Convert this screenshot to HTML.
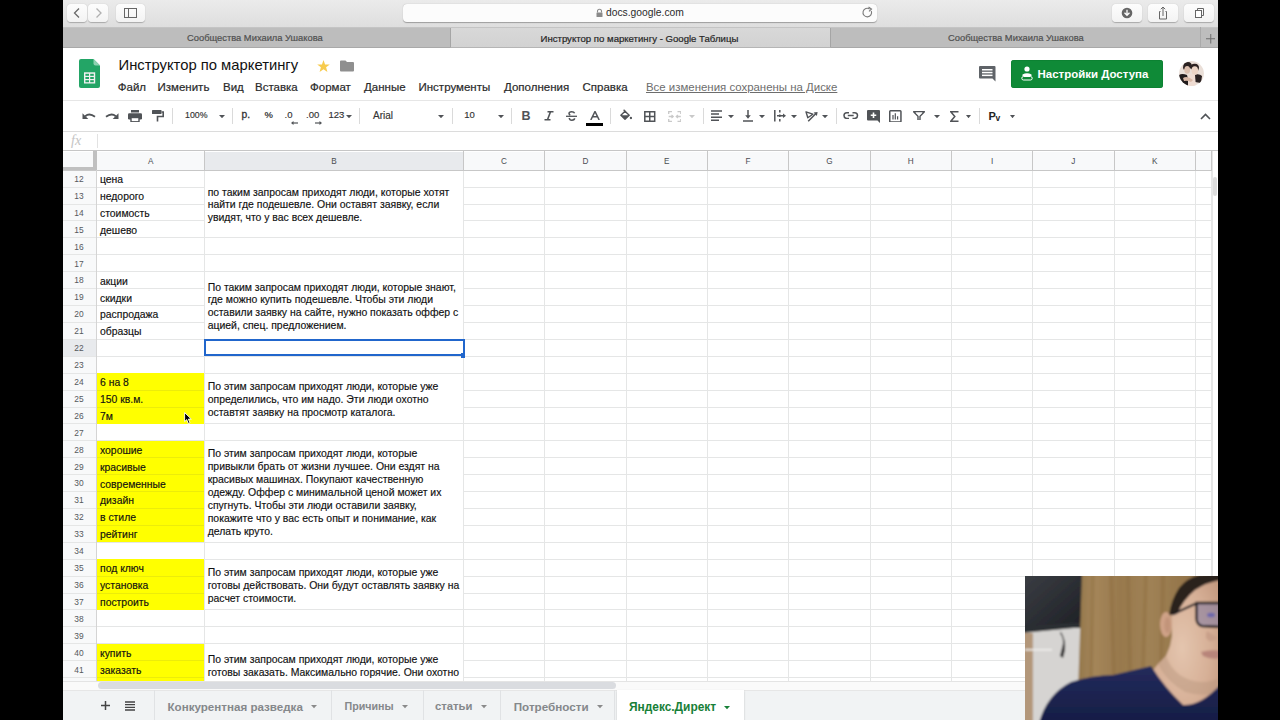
<!DOCTYPE html><html><head><meta charset="utf-8"><style>
*{box-sizing:border-box;margin:0;padding:0}
html,body{width:1280px;height:720px;overflow:hidden;background:#000}
body{position:relative;font-family:"Liberation Sans",sans-serif}
.a{position:absolute}
.t{position:absolute;white-space:pre;line-height:1}
#app{position:absolute;left:62.5px;top:0;width:1155px;height:720px;background:#fff;overflow:hidden}
</style></head><body><div id="app"></div>
<div class="a" style="left:62.5px;top:0;width:1155px;height:27.5px;background:linear-gradient(#ebebeb,#dedede);border-bottom:1px solid #c4c4c4"></div>
<div class="a" style="left:67px;top:4px;width:20px;height:18px;background:linear-gradient(#fdfdfd,#f3f3f3);border-radius:4px;box-shadow:0 0.5px 1px rgba(0,0,0,.25)"><svg width="20" height="18" style="position:absolute;left:0;top:0"><path d="M12 4.5 L7.5 9 L12 13.5" fill="none" stroke="#6a6a6a" stroke-width="1.3"/></svg></div>
<div class="a" style="left:88px;top:4px;width:20px;height:18px;background:linear-gradient(#fdfdfd,#f3f3f3);border-radius:4px;box-shadow:0 0.5px 1px rgba(0,0,0,.25)"><svg width="20" height="18" style="position:absolute;left:0;top:0"><path d="M8.5 4.5 L13 9 L8.5 13.5" fill="none" stroke="#b0b0b0" stroke-width="1.3"/></svg></div>
<div class="a" style="left:116px;top:4px;width:29px;height:18px;background:linear-gradient(#fdfdfd,#f3f3f3);border-radius:4px;box-shadow:0 0.5px 1px rgba(0,0,0,.25)"><svg width="29" height="18" style="position:absolute;left:0;top:0"><rect x="8.5" y="4.5" width="12" height="9" fill="none" stroke="#666" stroke-width="1"/><line x1="12.5" y1="4.5" x2="12.5" y2="13.5" stroke="#666" stroke-width="1"/></svg></div>
<div class="a" style="left:403px;top:4px;width:474px;height:18px;background:#fcfcfc;border-radius:4px;box-shadow:0 0.5px 1px rgba(0,0,0,.3)"></div>
<svg class="a" style="left:595px;top:8px" width="9" height="10"><path d="M2.5 4.5 V3.2 A2 2 0 0 1 6.5 3.2 V4.5" fill="none" stroke="#8a8a8a" stroke-width="1.1"/><rect x="1.5" y="4.5" width="6" height="4.5" rx="0.5" fill="#8a8a8a"/></svg>
<div class="t" style="left:606px;top:7.5px;font-size:10.3px;color:#2b2b2b">docs.google.com</div>
<svg class="a" style="left:861px;top:6px" width="13" height="13"><path d="M10.3 5 A4.3 4.3 0 1 1 8.7 3" fill="none" stroke="#7a7a7a" stroke-width="1.1"/><path d="M7.5 1 L10.5 3 L8 5.3" fill="none" stroke="#7a7a7a" stroke-width="1.1"/></svg>
<div class="a" style="left:1112px;top:4px;width:30px;height:18px;background:linear-gradient(#fdfdfd,#f3f3f3);border-radius:4px;box-shadow:0 0.5px 1px rgba(0,0,0,.25)"><svg width="30" height="18" style="position:absolute;left:0;top:0"><circle cx="15" cy="9" r="5.3" fill="#666"/><path d="M15 5.8 V11 M12.5 8.8 L15 11.3 L17.5 8.8" fill="none" stroke="#fff" stroke-width="1.3"/></svg></div>
<div class="a" style="left:1148px;top:4px;width:30px;height:18px;background:linear-gradient(#fdfdfd,#f3f3f3);border-radius:4px;box-shadow:0 0.5px 1px rgba(0,0,0,.25)"><svg width="30" height="18" style="position:absolute;left:0;top:0"><path d="M12.5 7.5 H11.5 V15 H18.5 V7.5 H17.5" fill="none" stroke="#666" stroke-width="1"/><path d="M15 12 V3 M12.8 5.2 L15 3 L17.2 5.2" fill="none" stroke="#666" stroke-width="1"/></svg></div>
<div class="a" style="left:1184px;top:4px;width:30px;height:18px;background:linear-gradient(#fdfdfd,#f3f3f3);border-radius:4px;box-shadow:0 0.5px 1px rgba(0,0,0,.25)"><svg width="30" height="18" style="position:absolute;left:0;top:0"><rect x="11.5" y="6.5" width="6" height="7" fill="#fff" stroke="#666" stroke-width="1"/><path d="M13.5 6.5 V4.5 H19.5 V11.5 H17.5" fill="none" stroke="#666" stroke-width="1"/></svg></div>
<div class="a" style="left:62.5px;top:27.5px;width:1155px;height:20.5px;background:#bdbdbd;border-bottom:1px solid #a9a9a9"></div>
<div class="a" style="left:449.5px;top:27.5px;width:381px;height:20.5px;background:linear-gradient(#d8d8d8,#d2d2d2);border-left:1px solid #a5a5a5;border-right:1px solid #a5a5a5;border-bottom:1px solid #b5b5b5"></div>
<div class="a" style="left:1200px;top:27px;width:18px;height:21px;border-left:1px solid #aaa"></div>
<svg class="a" style="left:1205.5px;top:34px" width="9.5" height="9.5"><path d="M4.75 0 V9.5 M0 4.75 H9.5" stroke="#6c6c6c" stroke-width="1"/></svg>
<div class="t" style="left:187px;top:33.8px;font-size:9.35px;color:#505050;-webkit-text-stroke:0.2px #505050">Сообщества Михаила Ушакова</div>
<div class="t" style="left:540.5px;top:33.8px;font-size:9.6px;color:#262626;-webkit-text-stroke:0.2px #262626">Инструктор по маркетингу - Google Таблицы</div>
<div class="t" style="left:948px;top:33.8px;font-size:9.35px;color:#505050;-webkit-text-stroke:0.2px #505050">Сообщества Михаила Ушакова</div>
<svg class="a" style="left:79px;top:59px" width="21" height="29" viewBox="0 0 21 29">
<path d="M2 0 H14.5 L21 6.5 V27 A2 2 0 0 1 19 29 H2 A2 2 0 0 1 0 27 V2 A2 2 0 0 1 2 0Z" fill="#23a566"/>
<path d="M14.5 0 L21 6.5 H16.5 A2 2 0 0 1 14.5 4.5Z" fill="#8ed1b1"/>
<rect x="5" y="13.3" width="11.2" height="11.2" fill="#f1f1f1"/>
<rect x="6.4" y="14.8" width="3.6" height="2" fill="#23a566"/><rect x="11.2" y="14.8" width="3.6" height="2" fill="#23a566"/>
<rect x="6.4" y="18" width="3.6" height="2" fill="#23a566"/><rect x="11.2" y="18" width="3.6" height="2" fill="#23a566"/>
<rect x="6.4" y="21.2" width="3.6" height="2" fill="#23a566"/><rect x="11.2" y="21.2" width="3.6" height="2" fill="#23a566"/>
</svg>
<div class="t" style="left:118.5px;top:57.5px;font-size:14.8px;color:#111">Инструктор по маркетингу</div>
<svg class="a" style="left:317px;top:59.5px" width="13" height="12" viewBox="0 0 24 23"><path d="M12 0 L15 8.5 H24 L17 14 L19.5 23 L12 17.5 L4.5 23 L7 14 L0 8.5 H9Z" fill="#f7cb4d"/></svg>
<svg class="a" style="left:339.5px;top:60px" width="14" height="12"><path d="M1 0.5 H5.5 L7 2 H13 A1 1 0 0 1 14 3 V10.5 A1 1 0 0 1 13 11.5 H1 A1 1 0 0 1 0 10.5 V1.5 A1 1 0 0 1 1 0.5Z" fill="#8f8f8f"/></svg>
<div class="t" style="left:117.8px;top:82px;font-size:11.5px;color:#2a2a2a;-webkit-text-stroke:0.2px #2a2a2a">Файл</div>
<div class="t" style="left:157.5px;top:82px;font-size:11.5px;color:#2a2a2a;-webkit-text-stroke:0.2px #2a2a2a">Изменить</div>
<div class="t" style="left:223px;top:82px;font-size:11.5px;color:#2a2a2a;-webkit-text-stroke:0.2px #2a2a2a">Вид</div>
<div class="t" style="left:255px;top:82px;font-size:11.5px;color:#2a2a2a;-webkit-text-stroke:0.2px #2a2a2a">Вставка</div>
<div class="t" style="left:310px;top:82px;font-size:11.5px;color:#2a2a2a;-webkit-text-stroke:0.2px #2a2a2a">Формат</div>
<div class="t" style="left:364px;top:82px;font-size:11.5px;color:#2a2a2a;-webkit-text-stroke:0.2px #2a2a2a">Данные</div>
<div class="t" style="left:418.5px;top:82px;font-size:11.5px;color:#2a2a2a;-webkit-text-stroke:0.2px #2a2a2a">Инструменты</div>
<div class="t" style="left:504px;top:82px;font-size:11.5px;color:#2a2a2a;-webkit-text-stroke:0.2px #2a2a2a">Дополнения</div>
<div class="t" style="left:582.5px;top:82px;font-size:11.5px;color:#2a2a2a;-webkit-text-stroke:0.2px #2a2a2a">Справка</div>
<div class="t" style="left:646px;top:82px;font-size:11.43px;color:#6d6d6d;text-decoration:underline">Все изменения сохранены на Диске</div>
<svg class="a" style="left:978.5px;top:66px" width="17" height="16"><path d="M1 0 H15.5 A1 1 0 0 1 16.5 1 V15.5 L13.5 12.5 H1 A1 1 0 0 1 0 11.5 V1 A1 1 0 0 1 1 0Z" fill="#5f6368"/><rect x="3" y="3" width="10.5" height="1.5" fill="#fff"/><rect x="3" y="5.8" width="10.5" height="1.5" fill="#fff"/><rect x="3" y="8.6" width="10.5" height="1.5" fill="#fff"/></svg>
<div class="a" style="left:1011px;top:59.5px;width:151.5px;height:28.5px;background:#0f8a37;border-radius:3px;box-shadow:inset 0 0 0 0.5px #0b7a2f"></div>
<svg class="a" style="left:1021px;top:66px" width="12" height="15" viewBox="0 0 12 15"><circle cx="6" cy="3" r="2.6" fill="#fff"/><path d="M1.5 8.5 Q6 6 10.5 8.5 V10 H1.5Z" fill="#fff"/><rect x="0.8" y="10.5" width="10.4" height="3.5" rx="1.7" fill="none" stroke="#fff" stroke-width="1"/></svg>
<div class="t" style="left:1037.5px;top:69.2px;font-size:11.47px;color:#fff;font-weight:700">Настройки Доступа</div>
<svg class="a" style="left:1179.2px;top:61.4px" width="25" height="25"><defs><clipPath id="av"><circle cx="12.5" cy="12.5" r="12.4"/></clipPath><filter id="avb"><feGaussianBlur stdDeviation="0.5"/></filter></defs>
<g clip-path="url(#av)"><rect width="25" height="25" fill="#eadfd8"/><g filter="url(#avb)">
<path d="M0 14 Q3 12 8 14 L11 26 H0Z" fill="#231a1a"/>
<path d="M15 14 Q20 12 23 15 L22 22 L16 21Z" fill="#2a2020"/>
<path d="M4 7 Q4 1 9 1 Q13 1 13 6 L11 8 Q8 4 5 9Z" fill="#2b2121"/>
<ellipse cx="8.2" cy="8.8" rx="2.9" ry="3.9" fill="#dcbfae"/>
<path d="M11.5 6 Q12 2.5 16 2.8 Q20 3 20 7 L19 10 Q16 5 12.5 8.5Z" fill="#2e2422"/>
<ellipse cx="15.8" cy="9.6" rx="3.3" ry="4.3" fill="#ecd4c5"/>
<path d="M9 13 Q12 12 16 14 L17 26 H9Z" fill="#efdcd2"/>
<path d="M4 17 Q8 14 14 19 L12 21 Q8 19 5 20Z" fill="#d9b8a6"/>
</g></g></svg>
<div class="a" style="left:63px;top:99.5px;width:1155px;height:1px;background:#e6e6e6"></div>
<div class="a" style="left:63px;top:130.5px;width:1155px;height:1px;background:#dcdcdc"></div>
<svg class="a" style="left:82px;top:111.5px" width="14" height="8"><path d="M3.2 4.2 Q7.5 0.5 13 4.8" fill="none" stroke="#505357" stroke-width="1.8"/><path d="M0.5 1.2 V7 H6.3Z" fill="#505357"/></svg>
<svg class="a" style="left:105px;top:111.5px" width="14" height="8"><path d="M10.8 4.2 Q6.5 0.5 1 4.8" fill="none" stroke="#505357" stroke-width="1.8"/><path d="M13.5 1.2 V7 H7.7Z" fill="#505357"/></svg>
<svg class="a" style="left:127.5px;top:110px" width="14" height="12"><rect x="3" y="0" width="8" height="2.5" fill="#505357"/><rect x="0" y="3.2" width="14" height="6.3" rx="1.2" fill="#505357"/><rect x="3" y="7.5" width="8" height="4.3" fill="#fff" stroke="#505357" stroke-width="1.4"/></svg>
<svg class="a" style="left:151.5px;top:110px" width="12" height="12"><rect x="0" y="0" width="9.5" height="4" rx="0.6" fill="#505357"/><path d="M9.5 2 H11.2 V6.5 H5.5 V11.5" fill="none" stroke="#505357" stroke-width="1.6"/></svg>
<div class="a" style="left:171.5px;top:108px;width:1px;height:16px;background:#dadada"></div>
<div class="t" style="left:185px;top:110.5px;font-size:8.8px;color:#333;-webkit-text-stroke:0.15px #333">100%</div>
<svg class="a" style="left:218.5px;top:114.8px" width="6" height="3.5"><path d="M0 0 H6 L3.0 3.2Z" fill="#505357"/></svg>
<div class="a" style="left:231.5px;top:108px;width:1px;height:16px;background:#dadada"></div>
<div class="t" style="left:241.5px;top:109.5px;font-size:10.3px;color:#333;-webkit-text-stroke:0.3px #333">р.</div>
<div class="t" style="left:264.5px;top:110px;font-size:9.5px;color:#3c3c3c;font-weight:700">%</div>
<div class="t" style="left:284.5px;top:110px;font-size:9.5px;color:#333;-webkit-text-stroke:0.15px #333">.0</div>
<svg class="a" style="left:290.5px;top:120.5px" width="7" height="4"><path d="M1 2 H7" stroke="#505357" stroke-width="1.2"/><path d="M0 2 L2.5 0 V4Z" fill="#505357"/></svg>
<div class="t" style="left:306px;top:110px;font-size:9.5px;color:#333;-webkit-text-stroke:0.15px #333">.00</div>
<svg class="a" style="left:314.5px;top:120.5px" width="7" height="4"><path d="M0 2 H6" stroke="#505357" stroke-width="1.2"/><path d="M7 2 L4.5 0 V4Z" fill="#505357"/></svg>
<div class="t" style="left:328.5px;top:110px;font-size:9.5px;color:#333;-webkit-text-stroke:0.15px #333">123</div>
<svg class="a" style="left:345.8px;top:114.8px" width="6" height="3.5"><path d="M0 0 H6 L3.0 3.2Z" fill="#505357"/></svg>
<div class="a" style="left:359.4px;top:108px;width:1px;height:16px;background:#dadada"></div>
<div class="t" style="left:373px;top:110.5px;font-size:10px;color:#333;-webkit-text-stroke:0.15px #333">Arial</div>
<svg class="a" style="left:437.5px;top:114.8px" width="6" height="3.5"><path d="M0 0 H6 L3.0 3.2Z" fill="#505357"/></svg>
<div class="a" style="left:451.5px;top:108px;width:1px;height:16px;background:#dadada"></div>
<div class="t" style="left:464.2px;top:109.6px;font-size:9.5px;color:#333;-webkit-text-stroke:0.15px #333">10</div>
<svg class="a" style="left:498px;top:114.8px" width="6" height="3.5"><path d="M0 0 H6 L3.0 3.2Z" fill="#505357"/></svg>
<div class="a" style="left:511.2px;top:108px;width:1px;height:16px;background:#dadada"></div>
<div class="t" style="left:521.5px;top:109.8px;font-size:12.5px;color:#505357;font-weight:700">B</div>
<svg class="a" style="left:543.5px;top:111px" width="10" height="9.5"><path d="M3.5 0.8 H9.5 M0.5 8.7 H6.5 M6.5 0.8 L3.5 8.7" fill="none" stroke="#505357" stroke-width="1.6"/></svg>
<svg class="a" style="left:565.5px;top:110.8px" width="11.5" height="10"><path d="M8.6 2.2 Q8 0.8 5.7 0.8 Q3 0.8 3 2.6 Q3 3.6 4.3 4.2 M3.3 7 Q3.5 9.2 5.8 9.2 Q8.6 9.2 8.6 7.3" fill="none" stroke="#505357" stroke-width="1.5"/><path d="M0 5.3 H11.5" stroke="#505357" stroke-width="1.3"/></svg>
<svg class="a" style="left:589.5px;top:110.8px" width="10" height="9"><path d="M0.8 9 L5 0.5 L9.2 9 M2.6 5.8 H7.4" fill="none" stroke="#505357" stroke-width="1.5"/></svg>
<div class="a" style="left:586.2px;top:122.5px;width:17px;height:3px;background:#000"></div>
<div class="a" style="left:610px;top:108px;width:1px;height:16px;background:#dadada"></div>
<svg class="a" style="left:619.5px;top:108.5px" width="12.5" height="11"><path d="M3.6 0.7 L5.8 2.9" stroke="#505357" stroke-width="1.3"/><path d="M0.9 6.2 L5 2.2 L9.2 6.2 L5 10.2Z" fill="#fff" stroke="#505357" stroke-width="1.4" stroke-linejoin="round"/><path d="M0.9 6.2 H9.2 L5 10.2Z" fill="#505357"/><circle cx="10.9" cy="9" r="1.15" fill="#505357"/></svg>
<svg class="a" style="left:644.2px;top:110.5px" width="11.5" height="11"><path d="M0.8 0.8 H10.7 V10.2 H0.8Z M5.75 0.8 V10.2 M0.8 5.5 H10.7" fill="none" stroke="#505357" stroke-width="1.5"/></svg>
<svg class="a" style="left:667.5px;top:110.5px" width="13.5" height="11"><path d="M0.7 3 V0.7 H4 M9.5 0.7 H12.8 V3 M0.7 8 V10.3 H4 M9.5 10.3 H12.8 V8 M0.7 5.5 H5 M12.8 5.5 H8.5" fill="none" stroke="#c9c9c9" stroke-width="1.3"/><path d="M3.5 4 L5.3 5.5 L3.5 7 M10 4 L8.2 5.5 L10 7" fill="none" stroke="#c9c9c9" stroke-width="1.1"/></svg>
<svg class="a" style="left:689.2px;top:114.8px" width="6" height="3.5"><path d="M0 0 H6 L3.0 3.2Z" fill="#c9c9c9"/></svg>
<div class="a" style="left:702.5px;top:108px;width:1px;height:16px;background:#dadada"></div>
<svg class="a" style="left:710.8px;top:110.2px" width="11.5" height="11.5"><path d="M0 1 H11.5 M0 4.1 H8 M0 7.2 H11.5 M0 10.3 H8" stroke="#505357" stroke-width="1.5"/></svg>
<svg class="a" style="left:727.5px;top:114.8px" width="6" height="3.5"><path d="M0 0 H6 L3.0 3.2Z" fill="#505357"/></svg>
<svg class="a" style="left:743px;top:109.5px" width="10" height="12"><path d="M5 0 V6" stroke="#505357" stroke-width="1.5"/><path d="M2.2 5.2 H7.8 L5 8.8Z" fill="#505357"/><path d="M0 11 H10" stroke="#505357" stroke-width="1.5"/></svg>
<svg class="a" style="left:759.3px;top:114.8px" width="6" height="3.5"><path d="M0 0 H6 L3.0 3.2Z" fill="#505357"/></svg>
<svg class="a" style="left:773.5px;top:110px" width="12" height="11.5"><path d="M0.8 0 V11.5 M5.8 0 V2.5 M5.8 4.5 V7 M5.8 9 V11.5 M3 5.75 H10.5" fill="none" stroke="#505357" stroke-width="1.5"/><path d="M12 5.75 L9 3.5 V8Z" fill="#505357"/></svg>
<svg class="a" style="left:790.5px;top:114.8px" width="6" height="3.5"><path d="M0 0 H6 L3.0 3.2Z" fill="#505357"/></svg>
<svg class="a" style="left:805px;top:110.5px" width="13" height="11"><path d="M1 0.8 L7.8 3.2 L2.8 6.8Z" fill="none" stroke="#505357" stroke-width="1.4" stroke-linejoin="round"/><path d="M3.2 10.3 L11.5 2" stroke="#505357" stroke-width="1.5"/><path d="M12.6 0.9 L8.6 1.6 L11.9 4.9Z" fill="#505357"/></svg>
<svg class="a" style="left:822.2px;top:114.8px" width="6" height="3.5"><path d="M0 0 H6 L3.0 3.2Z" fill="#505357"/></svg>
<div class="a" style="left:835.5px;top:108px;width:1px;height:16px;background:#dadada"></div>
<svg class="a" style="left:843px;top:112.3px" width="15.5" height="7.2"><path d="M6 0.8 H3.8 A2.8 2.8 0 0 0 3.8 6.4 H6 M9.5 0.8 H11.7 A2.8 2.8 0 0 1 11.7 6.4 H9.5 M4.8 3.6 H10.7" fill="none" stroke="#505357" stroke-width="1.5"/></svg>
<svg class="a" style="left:866.8px;top:109.6px" width="13" height="13"><path d="M0 1 A1 1 0 0 1 1 0 H12 A1 1 0 0 1 13 1 V13 L10.5 10.5 H1 A1 1 0 0 1 0 9.5Z" fill="#505357"/><path d="M6.5 2.5 V8 M3.75 5.25 H9.25" stroke="#fff" stroke-width="1.6"/></svg>
<svg class="a" style="left:889.3px;top:109.6px" width="12.7" height="12.7"><rect x="0.75" y="0.75" width="11.2" height="11.2" rx="0.8" fill="none" stroke="#505357" stroke-width="1.5"/><path d="M4 5 V9.5 M6.3 3.3 V9.5 M8.6 6.3 V9.5" stroke="#505357" stroke-width="1.2"/></svg>
<svg class="a" style="left:913px;top:110.8px" width="12" height="9.5"><path d="M0.6 0.8 H11.4 L7 5.2 V9.5 H5 V5.2Z" fill="none" stroke="#505357" stroke-width="1.4" stroke-linejoin="round"/><path d="M2.6 1.6 H9.4 L6 4.8Z" fill="#fff"/></svg>
<svg class="a" style="left:934px;top:114.8px" width="6" height="3.5"><path d="M0 0 H6 L3.0 3.2Z" fill="#505357"/></svg>
<svg class="a" style="left:950.2px;top:110.5px" width="8.8" height="11"><path d="M8.5 0.8 H0.8 L4.8 5.5 L0.8 10.2 H8.5" fill="none" stroke="#505357" stroke-width="1.5"/></svg>
<svg class="a" style="left:966.2px;top:114.8px" width="5" height="3.5"><path d="M0 0 H5 L2.5 3.2Z" fill="#505357"/></svg>
<div class="a" style="left:979.4px;top:108px;width:1px;height:16px;background:#dadada"></div>
<div class="t" style="left:988.5px;top:111px;font-size:11px;color:#222;font-weight:700">Р</div>
<div class="t" style="left:995.5px;top:113.5px;font-size:8.5px;color:#222;font-weight:700">v</div>
<svg class="a" style="left:1009.8px;top:114.8px" width="5" height="3.5"><path d="M0 0 H5 L2.5 3.2Z" fill="#505357"/></svg>
<svg class="a" style="left:1199.5px;top:112.5px" width="11" height="7"><path d="M1 6 L5.5 1.5 L10 6" fill="none" stroke="#505357" stroke-width="1.6"/></svg>
<div class="t" style="left:71px;top:133.5px;font-size:14px;color:#c4c4c4;font-family:'Liberation Serif',serif;font-style:italic">fx</div>
<div class="a" style="left:96.5px;top:134px;width:1px;height:14px;background:#e2e2e2"></div>
<div class="a" style="left:63px;top:150.3px;width:1155px;height:1.2px;background:#c6c6c6"></div>
<div class="a" style="left:63px;top:151.5px;width:1149px;height:18.8px;background:#f8f9fa"></div>
<div class="a" style="left:204.4px;top:151.5px;width:259px;height:18.8px;background:#e8eaed"></div>
<div class="a" style="left:63px;top:170px;width:34px;height:520px;background:#f8f9fa"></div>
<div class="a" style="left:63px;top:339.34999999999997px;width:34px;height:16.915px;background:#e8eaed"></div>
<div class="a" style="left:63px;top:186.61px;width:141.4px;height:1px;background:#e5e6e6"></div>
<div class="a" style="left:463.4px;top:186.61px;width:748.3px;height:1px;background:#e5e6e6"></div>
<div class="a" style="left:63px;top:203.53px;width:141.4px;height:1px;background:#e5e6e6"></div>
<div class="a" style="left:463.4px;top:203.53px;width:748.3px;height:1px;background:#e5e6e6"></div>
<div class="a" style="left:63px;top:220.44px;width:141.4px;height:1px;background:#e5e6e6"></div>
<div class="a" style="left:463.4px;top:220.44px;width:748.3px;height:1px;background:#e5e6e6"></div>
<div class="a" style="left:63px;top:237.36px;width:1148.7px;height:1px;background:#e5e6e6"></div>
<div class="a" style="left:63px;top:254.27px;width:1148.7px;height:1px;background:#e5e6e6"></div>
<div class="a" style="left:63px;top:271.19px;width:1148.7px;height:1px;background:#e5e6e6"></div>
<div class="a" style="left:63px;top:288.11px;width:141.4px;height:1px;background:#e5e6e6"></div>
<div class="a" style="left:463.4px;top:288.11px;width:748.3px;height:1px;background:#e5e6e6"></div>
<div class="a" style="left:63px;top:305.02px;width:141.4px;height:1px;background:#e5e6e6"></div>
<div class="a" style="left:463.4px;top:305.02px;width:748.3px;height:1px;background:#e5e6e6"></div>
<div class="a" style="left:63px;top:321.93px;width:141.4px;height:1px;background:#e5e6e6"></div>
<div class="a" style="left:463.4px;top:321.93px;width:748.3px;height:1px;background:#e5e6e6"></div>
<div class="a" style="left:63px;top:338.85px;width:1148.7px;height:1px;background:#e5e6e6"></div>
<div class="a" style="left:63px;top:355.76px;width:1148.7px;height:1px;background:#e5e6e6"></div>
<div class="a" style="left:63px;top:372.68px;width:1148.7px;height:1px;background:#e5e6e6"></div>
<div class="a" style="left:63px;top:389.59px;width:141.4px;height:1px;background:#e5e6e6"></div>
<div class="a" style="left:463.4px;top:389.59px;width:748.3px;height:1px;background:#e5e6e6"></div>
<div class="a" style="left:63px;top:406.51px;width:141.4px;height:1px;background:#e5e6e6"></div>
<div class="a" style="left:463.4px;top:406.51px;width:748.3px;height:1px;background:#e5e6e6"></div>
<div class="a" style="left:63px;top:423.42px;width:1148.7px;height:1px;background:#e5e6e6"></div>
<div class="a" style="left:63px;top:440.34px;width:1148.7px;height:1px;background:#e5e6e6"></div>
<div class="a" style="left:63px;top:457.25px;width:141.4px;height:1px;background:#e5e6e6"></div>
<div class="a" style="left:463.4px;top:457.25px;width:748.3px;height:1px;background:#e5e6e6"></div>
<div class="a" style="left:63px;top:474.17px;width:141.4px;height:1px;background:#e5e6e6"></div>
<div class="a" style="left:463.4px;top:474.17px;width:748.3px;height:1px;background:#e5e6e6"></div>
<div class="a" style="left:63px;top:491.08px;width:141.4px;height:1px;background:#e5e6e6"></div>
<div class="a" style="left:463.4px;top:491.08px;width:748.3px;height:1px;background:#e5e6e6"></div>
<div class="a" style="left:63px;top:508.00px;width:141.4px;height:1px;background:#e5e6e6"></div>
<div class="a" style="left:463.4px;top:508.00px;width:748.3px;height:1px;background:#e5e6e6"></div>
<div class="a" style="left:63px;top:524.91px;width:141.4px;height:1px;background:#e5e6e6"></div>
<div class="a" style="left:463.4px;top:524.91px;width:748.3px;height:1px;background:#e5e6e6"></div>
<div class="a" style="left:63px;top:541.83px;width:1148.7px;height:1px;background:#e5e6e6"></div>
<div class="a" style="left:63px;top:558.74px;width:1148.7px;height:1px;background:#e5e6e6"></div>
<div class="a" style="left:63px;top:575.66px;width:141.4px;height:1px;background:#e5e6e6"></div>
<div class="a" style="left:463.4px;top:575.66px;width:748.3px;height:1px;background:#e5e6e6"></div>
<div class="a" style="left:63px;top:592.58px;width:141.4px;height:1px;background:#e5e6e6"></div>
<div class="a" style="left:463.4px;top:592.58px;width:748.3px;height:1px;background:#e5e6e6"></div>
<div class="a" style="left:63px;top:609.49px;width:1148.7px;height:1px;background:#e5e6e6"></div>
<div class="a" style="left:63px;top:626.40px;width:1148.7px;height:1px;background:#e5e6e6"></div>
<div class="a" style="left:63px;top:643.32px;width:1148.7px;height:1px;background:#e5e6e6"></div>
<div class="a" style="left:63px;top:660.23px;width:141.4px;height:1px;background:#e5e6e6"></div>
<div class="a" style="left:463.4px;top:660.23px;width:748.3px;height:1px;background:#e5e6e6"></div>
<div class="a" style="left:63px;top:677.15px;width:141.4px;height:1px;background:#e5e6e6"></div>
<div class="a" style="left:463.4px;top:677.15px;width:748.3px;height:1px;background:#e5e6e6"></div>
<div class="a" style="left:97px;top:373.17999999999995px;width:107.4px;height:50.745px;background:#ffff00"></div>
<div class="a" style="left:97px;top:440.84px;width:107.4px;height:101.49px;background:#ffff00"></div>
<div class="a" style="left:97px;top:559.2449999999999px;width:107.4px;height:50.745px;background:#ffff00"></div>
<div class="a" style="left:97px;top:643.8199999999999px;width:107.4px;height:50.745px;background:#ffff00"></div>
<div class="a" style="left:97px;top:389.59px;width:107.4px;height:1px;background:#ecec0a"></div>
<div class="a" style="left:97px;top:406.51px;width:107.4px;height:1px;background:#ecec0a"></div>
<div class="a" style="left:97px;top:457.25px;width:107.4px;height:1px;background:#ecec0a"></div>
<div class="a" style="left:97px;top:474.17px;width:107.4px;height:1px;background:#ecec0a"></div>
<div class="a" style="left:97px;top:491.08px;width:107.4px;height:1px;background:#ecec0a"></div>
<div class="a" style="left:97px;top:508.00px;width:107.4px;height:1px;background:#ecec0a"></div>
<div class="a" style="left:97px;top:524.91px;width:107.4px;height:1px;background:#ecec0a"></div>
<div class="a" style="left:97px;top:575.66px;width:107.4px;height:1px;background:#ecec0a"></div>
<div class="a" style="left:97px;top:592.58px;width:107.4px;height:1px;background:#ecec0a"></div>
<div class="a" style="left:97px;top:660.23px;width:107.4px;height:1px;background:#ecec0a"></div>
<div class="a" style="left:97px;top:677.15px;width:107.4px;height:1px;background:#ecec0a"></div>
<div class="a" style="left:203.90px;top:170px;width:1px;height:519.5px;background:#e5e6e6"></div>
<div class="a" style="left:203.90px;top:151px;width:1px;height:19.3px;background:#c7c7c7"></div>
<div class="a" style="left:462.90px;top:170px;width:1px;height:519.5px;background:#e5e6e6"></div>
<div class="a" style="left:462.90px;top:151px;width:1px;height:19.3px;background:#c7c7c7"></div>
<div class="a" style="left:544.23px;top:170px;width:1px;height:519.5px;background:#e5e6e6"></div>
<div class="a" style="left:544.23px;top:151px;width:1px;height:19.3px;background:#c7c7c7"></div>
<div class="a" style="left:625.56px;top:170px;width:1px;height:519.5px;background:#e5e6e6"></div>
<div class="a" style="left:625.56px;top:151px;width:1px;height:19.3px;background:#c7c7c7"></div>
<div class="a" style="left:706.89px;top:170px;width:1px;height:519.5px;background:#e5e6e6"></div>
<div class="a" style="left:706.89px;top:151px;width:1px;height:19.3px;background:#c7c7c7"></div>
<div class="a" style="left:788.22px;top:170px;width:1px;height:519.5px;background:#e5e6e6"></div>
<div class="a" style="left:788.22px;top:151px;width:1px;height:19.3px;background:#c7c7c7"></div>
<div class="a" style="left:869.55px;top:170px;width:1px;height:519.5px;background:#e5e6e6"></div>
<div class="a" style="left:869.55px;top:151px;width:1px;height:19.3px;background:#c7c7c7"></div>
<div class="a" style="left:950.88px;top:170px;width:1px;height:519.5px;background:#e5e6e6"></div>
<div class="a" style="left:950.88px;top:151px;width:1px;height:19.3px;background:#c7c7c7"></div>
<div class="a" style="left:1032.21px;top:170px;width:1px;height:519.5px;background:#e5e6e6"></div>
<div class="a" style="left:1032.21px;top:151px;width:1px;height:19.3px;background:#c7c7c7"></div>
<div class="a" style="left:1113.54px;top:170px;width:1px;height:519.5px;background:#e5e6e6"></div>
<div class="a" style="left:1113.54px;top:151px;width:1px;height:19.3px;background:#c7c7c7"></div>
<div class="a" style="left:1194.87px;top:170px;width:1px;height:519.5px;background:#e5e6e6"></div>
<div class="a" style="left:1194.87px;top:151px;width:1px;height:19.3px;background:#c7c7c7"></div>
<div class="a" style="left:1211.20px;top:170px;width:1px;height:519.5px;background:#e5e6e6"></div>
<div class="a" style="left:1211.20px;top:151px;width:1px;height:19.3px;background:#c7c7c7"></div>
<div class="a" style="left:63px;top:169.5px;width:1149px;height:1px;background:#c7c7c7"></div>
<div class="a" style="left:96px;top:170px;width:1px;height:520px;background:#d4d4d4"></div>
<div class="a" style="left:93px;top:151px;width:4px;height:19px;background:#c0c0c0"></div>
<div class="a" style="left:63px;top:167px;width:34px;height:3px;background:#c0c0c0"></div>
<div class="t" style="left:97px;width:107.4px;text-align:center;top:157.5px;font-size:8.2px;color:#4a4d52">A</div>
<div class="t" style="left:204.4px;width:259.0px;text-align:center;top:157.5px;font-size:8.2px;color:#4a4d52">B</div>
<div class="t" style="left:463.4px;width:81.33000000000004px;text-align:center;top:157.5px;font-size:8.2px;color:#4a4d52">C</div>
<div class="t" style="left:544.73px;width:81.33000000000004px;text-align:center;top:157.5px;font-size:8.2px;color:#4a4d52">D</div>
<div class="t" style="left:626.0600000000001px;width:81.33000000000004px;text-align:center;top:157.5px;font-size:8.2px;color:#4a4d52">E</div>
<div class="t" style="left:707.3900000000001px;width:81.33000000000004px;text-align:center;top:157.5px;font-size:8.2px;color:#4a4d52">F</div>
<div class="t" style="left:788.7200000000001px;width:81.33000000000004px;text-align:center;top:157.5px;font-size:8.2px;color:#4a4d52">G</div>
<div class="t" style="left:870.0500000000002px;width:81.33000000000004px;text-align:center;top:157.5px;font-size:8.2px;color:#4a4d52">H</div>
<div class="t" style="left:951.3800000000002px;width:81.33000000000004px;text-align:center;top:157.5px;font-size:8.2px;color:#4a4d52">I</div>
<div class="t" style="left:1032.7100000000003px;width:81.32999999999993px;text-align:center;top:157.5px;font-size:8.2px;color:#4a4d52">J</div>
<div class="t" style="left:1114.0400000000002px;width:81.32999999999993px;text-align:center;top:157.5px;font-size:8.2px;color:#4a4d52">K</div>
<div class="t" style="left:63px;width:32px;text-align:center;top:175.00px;font-size:8.4px;color:#55585c">12</div>
<div class="t" style="left:63px;width:32px;text-align:center;top:191.91px;font-size:8.4px;color:#55585c">13</div>
<div class="t" style="left:63px;width:32px;text-align:center;top:208.83px;font-size:8.4px;color:#55585c">14</div>
<div class="t" style="left:63px;width:32px;text-align:center;top:225.75px;font-size:8.4px;color:#55585c">15</div>
<div class="t" style="left:63px;width:32px;text-align:center;top:242.66px;font-size:8.4px;color:#55585c">16</div>
<div class="t" style="left:63px;width:32px;text-align:center;top:259.57px;font-size:8.4px;color:#55585c">17</div>
<div class="t" style="left:63px;width:32px;text-align:center;top:276.49px;font-size:8.4px;color:#55585c">18</div>
<div class="t" style="left:63px;width:32px;text-align:center;top:293.41px;font-size:8.4px;color:#55585c">19</div>
<div class="t" style="left:63px;width:32px;text-align:center;top:310.32px;font-size:8.4px;color:#55585c">20</div>
<div class="t" style="left:63px;width:32px;text-align:center;top:327.23px;font-size:8.4px;color:#55585c">21</div>
<div class="t" style="left:63px;width:32px;text-align:center;top:344.15px;font-size:8.4px;color:#55585c">22</div>
<div class="t" style="left:63px;width:32px;text-align:center;top:361.06px;font-size:8.4px;color:#55585c">23</div>
<div class="t" style="left:63px;width:32px;text-align:center;top:377.98px;font-size:8.4px;color:#55585c">24</div>
<div class="t" style="left:63px;width:32px;text-align:center;top:394.89px;font-size:8.4px;color:#55585c">25</div>
<div class="t" style="left:63px;width:32px;text-align:center;top:411.81px;font-size:8.4px;color:#55585c">26</div>
<div class="t" style="left:63px;width:32px;text-align:center;top:428.72px;font-size:8.4px;color:#55585c">27</div>
<div class="t" style="left:63px;width:32px;text-align:center;top:445.64px;font-size:8.4px;color:#55585c">28</div>
<div class="t" style="left:63px;width:32px;text-align:center;top:462.56px;font-size:8.4px;color:#55585c">29</div>
<div class="t" style="left:63px;width:32px;text-align:center;top:479.47px;font-size:8.4px;color:#55585c">30</div>
<div class="t" style="left:63px;width:32px;text-align:center;top:496.38px;font-size:8.4px;color:#55585c">31</div>
<div class="t" style="left:63px;width:32px;text-align:center;top:513.30px;font-size:8.4px;color:#55585c">32</div>
<div class="t" style="left:63px;width:32px;text-align:center;top:530.21px;font-size:8.4px;color:#55585c">33</div>
<div class="t" style="left:63px;width:32px;text-align:center;top:547.13px;font-size:8.4px;color:#55585c">34</div>
<div class="t" style="left:63px;width:32px;text-align:center;top:564.04px;font-size:8.4px;color:#55585c">35</div>
<div class="t" style="left:63px;width:32px;text-align:center;top:580.96px;font-size:8.4px;color:#55585c">36</div>
<div class="t" style="left:63px;width:32px;text-align:center;top:597.88px;font-size:8.4px;color:#55585c">37</div>
<div class="t" style="left:63px;width:32px;text-align:center;top:614.79px;font-size:8.4px;color:#55585c">38</div>
<div class="t" style="left:63px;width:32px;text-align:center;top:631.70px;font-size:8.4px;color:#55585c">39</div>
<div class="t" style="left:63px;width:32px;text-align:center;top:648.62px;font-size:8.4px;color:#55585c">40</div>
<div class="t" style="left:63px;width:32px;text-align:center;top:665.53px;font-size:8.4px;color:#55585c">41</div>
<div class="t" style="left:100px;top:175.10px;font-size:10.4px;color:#111;-webkit-text-stroke:0.15px #111">цена</div>
<div class="t" style="left:100px;top:192.01px;font-size:10.4px;color:#111;-webkit-text-stroke:0.15px #111">недорого</div>
<div class="t" style="left:100px;top:208.93px;font-size:10.4px;color:#111;-webkit-text-stroke:0.15px #111">стоимость</div>
<div class="t" style="left:100px;top:225.84px;font-size:10.4px;color:#111;-webkit-text-stroke:0.15px #111">дешево</div>
<div class="t" style="left:100px;top:276.59px;font-size:10.4px;color:#111;-webkit-text-stroke:0.15px #111">акции</div>
<div class="t" style="left:100px;top:293.50px;font-size:10.4px;color:#111;-webkit-text-stroke:0.15px #111">скидки</div>
<div class="t" style="left:100px;top:310.42px;font-size:10.4px;color:#111;-webkit-text-stroke:0.15px #111">распродажа</div>
<div class="t" style="left:100px;top:327.33px;font-size:10.4px;color:#111;-webkit-text-stroke:0.15px #111">образцы</div>
<div class="t" style="left:100px;top:378.08px;font-size:10.4px;color:#111;-webkit-text-stroke:0.15px #111">6 на 8</div>
<div class="t" style="left:100px;top:394.99px;font-size:10.4px;color:#111;-webkit-text-stroke:0.15px #111">150 кв.м.</div>
<div class="t" style="left:100px;top:411.91px;font-size:10.4px;color:#111;-webkit-text-stroke:0.15px #111">7м</div>
<div class="t" style="left:100px;top:445.74px;font-size:10.4px;color:#111;-webkit-text-stroke:0.15px #111">хорошие</div>
<div class="t" style="left:100px;top:462.65px;font-size:10.4px;color:#111;-webkit-text-stroke:0.15px #111">красивые</div>
<div class="t" style="left:100px;top:479.57px;font-size:10.4px;color:#111;-webkit-text-stroke:0.15px #111">современные</div>
<div class="t" style="left:100px;top:496.48px;font-size:10.4px;color:#111;-webkit-text-stroke:0.15px #111">дизайн</div>
<div class="t" style="left:100px;top:513.40px;font-size:10.4px;color:#111;-webkit-text-stroke:0.15px #111">в стиле</div>
<div class="t" style="left:100px;top:530.31px;font-size:10.4px;color:#111;-webkit-text-stroke:0.15px #111">рейтинг</div>
<div class="t" style="left:100px;top:564.14px;font-size:10.4px;color:#111;-webkit-text-stroke:0.15px #111">под ключ</div>
<div class="t" style="left:100px;top:581.06px;font-size:10.4px;color:#111;-webkit-text-stroke:0.15px #111">установка</div>
<div class="t" style="left:100px;top:597.98px;font-size:10.4px;color:#111;-webkit-text-stroke:0.15px #111">построить</div>
<div class="t" style="left:100px;top:648.72px;font-size:10.4px;color:#111;-webkit-text-stroke:0.15px #111">купить</div>
<div class="t" style="left:100px;top:665.63px;font-size:10.4px;color:#111;-webkit-text-stroke:0.15px #111">заказать</div>
<div class="t" style="left:207.7px;top:187.50px;font-size:10.45px;color:#111;-webkit-text-stroke:0.15px #111">по таким запросам приходят люди, которые хотят</div>
<div class="t" style="left:207.7px;top:200.45px;font-size:10.45px;color:#111;-webkit-text-stroke:0.15px #111">найти где подешевле. Они оставят заявку, если</div>
<div class="t" style="left:207.7px;top:213.40px;font-size:10.45px;color:#111;-webkit-text-stroke:0.15px #111">увидят, что у вас всех дешевле.</div>
<div class="t" style="left:207.7px;top:282.52px;font-size:10.45px;color:#111;-webkit-text-stroke:0.15px #111">По таким запросам приходят люди, которые знают,</div>
<div class="t" style="left:207.7px;top:295.47px;font-size:10.45px;color:#111;-webkit-text-stroke:0.15px #111">где можно купить подешевле. Чтобы эти люди</div>
<div class="t" style="left:207.7px;top:308.42px;font-size:10.45px;color:#111;-webkit-text-stroke:0.15px #111">оставили заявку на сайте, нужно показать оффер с</div>
<div class="t" style="left:207.7px;top:321.37px;font-size:10.45px;color:#111;-webkit-text-stroke:0.15px #111">ацией, спец. предложением.</div>
<div class="t" style="left:207.7px;top:382.03px;font-size:10.45px;color:#111;-webkit-text-stroke:0.15px #111">По этим запросам приходят люди, которые уже</div>
<div class="t" style="left:207.7px;top:394.98px;font-size:10.45px;color:#111;-webkit-text-stroke:0.15px #111">определились, что им надо. Эти люди охотно</div>
<div class="t" style="left:207.7px;top:407.93px;font-size:10.45px;color:#111;-webkit-text-stroke:0.15px #111">оставтят заявку на просмотр каталога.</div>
<div class="t" style="left:207.7px;top:449.16px;font-size:10.45px;color:#111;-webkit-text-stroke:0.15px #111">По этим запросам приходят люди, которые</div>
<div class="t" style="left:207.7px;top:462.11px;font-size:10.45px;color:#111;-webkit-text-stroke:0.15px #111">привыкли брать от жизни лучшее. Они ездят на</div>
<div class="t" style="left:207.7px;top:475.06px;font-size:10.45px;color:#111;-webkit-text-stroke:0.15px #111">красивых машинах. Покупают качественную</div>
<div class="t" style="left:207.7px;top:488.01px;font-size:10.45px;color:#111;-webkit-text-stroke:0.15px #111">одежду. Оффер с минимальной ценой может их</div>
<div class="t" style="left:207.7px;top:500.96px;font-size:10.45px;color:#111;-webkit-text-stroke:0.15px #111">спугнуть. Чтобы эти люди оставили заявку,</div>
<div class="t" style="left:207.7px;top:513.91px;font-size:10.45px;color:#111;-webkit-text-stroke:0.15px #111">покажите что у вас есть опыт и понимание, как</div>
<div class="t" style="left:207.7px;top:526.86px;font-size:10.45px;color:#111;-webkit-text-stroke:0.15px #111">делать круто.</div>
<div class="t" style="left:207.7px;top:568.09px;font-size:10.45px;color:#111;-webkit-text-stroke:0.15px #111">По этим запросам приходят люди, которые уже</div>
<div class="t" style="left:207.7px;top:581.04px;font-size:10.45px;color:#111;-webkit-text-stroke:0.15px #111">готовы действовать. Они будут оставлять заявку на</div>
<div class="t" style="left:207.7px;top:593.99px;font-size:10.45px;color:#111;-webkit-text-stroke:0.15px #111">расчет стоимости.</div>
<div class="t" style="left:207.7px;top:654.65px;font-size:10.45px;color:#111;-webkit-text-stroke:0.15px #111">По этим запросам приходят люди, которые уже</div>
<div class="t" style="left:207.7px;top:667.60px;font-size:10.45px;color:#111;-webkit-text-stroke:0.15px #111">готовы заказать. Максимально горячие. Они охотно</div>
<div class="t" style="left:207.7px;top:680.55px;font-size:10.45px;color:#111;-webkit-text-stroke:0.15px #111"></div>
<div class="t" style="left:207.7px;top:693.50px;font-size:10.45px;color:#111;-webkit-text-stroke:0.15px #111"></div>
<div class="a" style="left:204px;top:339.05px;width:260.5px;height:17.21px;border:2px solid #2166cc"></div>
<div class="a" style="left:460.6px;top:353.26px;width:4.8px;height:4.8px;background:#2166cc"></div>
<svg class="a" style="left:184.3px;top:411.5px" width="9" height="13" viewBox="0 0 9 13"><path d="M0.6 0.6 V9.6 L2.7 7.6 L4.4 11.6 L6 10.9 L4.4 7.1 H7.3Z" fill="#000" stroke="#fff" stroke-width="0.9" stroke-linejoin="round"/></svg>
<div class="a" style="left:63px;top:680.6px;width:1149px;height:9px;background:#fafafa;border-top:1px solid #e4e4e4"></div>
<div class="a" style="left:98px;top:682.2px;width:518px;height:7px;background:#dadce0;border-radius:3.5px"></div>
<div class="a" style="left:1211.5px;top:151px;width:1px;height:539px;background:#e6e6e6"></div>
<div class="a" style="left:1213px;top:176.5px;width:4px;height:19.5px;background:#dcdcdc;border-radius:2px"></div>
<div class="a" style="left:62.5px;top:689.5px;width:1155px;height:31px;background:#f1f3f4;border-top:1px solid #e6e6e6"></div>
<svg class="a" style="left:101px;top:701px" width="9" height="9"><path d="M4.5 0 V9 M0 4.5 H9" stroke="#444" stroke-width="1.5"/></svg>
<svg class="a" style="left:125.3px;top:701px" width="10" height="10"><path d="M0 1 H10 M0 3.7 H10 M0 6.3 H10 M0 9 H10" stroke="#444" stroke-width="1.3"/></svg>
<div class="a" style="left:153.7px;top:690px;width:1px;height:30px;background:#e0e2e4"></div>
<div class="a" style="left:331.2px;top:690px;width:1px;height:30px;background:#e0e2e4"></div>
<div class="a" style="left:422.5px;top:690px;width:1px;height:30px;background:#e0e2e4"></div>
<div class="a" style="left:500px;top:690px;width:1px;height:30px;background:#e0e2e4"></div>
<div class="a" style="left:613.7px;top:690px;width:1px;height:30px;background:#e0e2e4"></div>
<div class="t" style="left:167.5px;top:701px;font-size:11.60px;color:#85888b;font-weight:700">Конкурентная разведка</div>
<svg class="a" style="left:311px;top:705px" width="6" height="3.5"><path d="M0 0 H6 L3.0 3.2Z" fill="#8a8a8a"/></svg>
<div class="t" style="left:344.5px;top:701px;font-size:10.70px;color:#85888b;font-weight:700">Причины</div>
<svg class="a" style="left:402px;top:705px" width="6" height="3.5"><path d="M0 0 H6 L3.0 3.2Z" fill="#8a8a8a"/></svg>
<div class="t" style="left:435px;top:701px;font-size:11.29px;color:#85888b;font-weight:700">статьи</div>
<svg class="a" style="left:480.5px;top:705px" width="6" height="3.5"><path d="M0 0 H6 L3.0 3.2Z" fill="#8a8a8a"/></svg>
<div class="t" style="left:513.7px;top:701px;font-size:11.67px;color:#85888b;font-weight:700">Потребности</div>
<svg class="a" style="left:597px;top:705px" width="6" height="3.5"><path d="M0 0 H6 L3.0 3.2Z" fill="#8a8a8a"/></svg>
<div class="a" style="left:616.5px;top:689.5px;width:127px;height:31px;background:#fff;box-shadow:0 1px 2px rgba(0,0,0,.2)"></div>
<div class="t" style="left:629px;top:701.5px;font-size:11.9px;color:#188038;font-weight:700">Яндекс.Директ</div>
<svg class="a" style="left:724px;top:706px" width="6" height="3.5"><path d="M0 0 H6 L3.0 3.2Z" fill="#188038"/></svg>
<svg class="a" style="left:1025px;top:576px" width="192.5" height="144" viewBox="0 0 192.5 144">
<defs><filter id="bl" x="-5%" y="-5%" width="110%" height="110%"><feGaussianBlur stdDeviation="1.2"/></filter>
<linearGradient id="cur" x1="0" x2="1" y1="0" y2="0"><stop offset="0" stop-color="#93764a"/><stop offset=".12" stop-color="#a5865a"/><stop offset=".3" stop-color="#98794d"/><stop offset=".5" stop-color="#a08255"/><stop offset=".75" stop-color="#94754a"/><stop offset="1" stop-color="#7e6340"/></linearGradient>
<linearGradient id="tv" x1="0" y1="0" x2="1" y2="1"><stop offset="0" stop-color="#3b3e44"/><stop offset="1" stop-color="#1e2025"/></linearGradient>
<radialGradient id="face" cx=".45" cy=".5" r=".65"><stop offset="0" stop-color="#e4c5ae"/><stop offset=".6" stop-color="#d7b097"/><stop offset="1" stop-color="#c49a80"/></radialGradient>
<linearGradient id="shirt" x1="0" y1="0" x2="0" y2="1"><stop offset="0" stop-color="#232b5c"/><stop offset="1" stop-color="#161d45"/></linearGradient>
</defs>
<g filter="url(#bl)">
<rect x="-3" y="-3" width="199" height="150" fill="#d6d4d2"/>
<rect x="-3" y="-3" width="62" height="55" fill="url(#tv)"/>
<path d="M-3 50 L59 46 L59 51 L-3 57Z" fill="#2b2d30"/>
<path d="M-3 57 H8 V147 H-3Z" fill="#b3977a"/>
<path d="M35 57 Q40 64 37 72 L35 80 L38 82 L40 74 Q41 64 36 56" fill="#2a2a2a"/>
<path d="M0 73 H27 V74.5 H0Z" fill="#f2f0ee"/>
<path d="M57 -3 H196 V147 H52 Z" fill="url(#cur)"/>
<path d="M68 -3 L66 104 M86 -3 L89 100 M103 -3 L105 97 M121 -3 L118 93 M138 -3 L136 90" stroke="#866639" stroke-width="4" opacity=".3"/>
<path d="M146 36 L152 18 Q160 4 172 0 L196 -3 V147 H125 L125 98 L133 88 L141 80 L145 70 L147 60 Z" fill="url(#face)"/>
<ellipse cx="141" cy="48.5" rx="6" ry="12.5" fill="#cfa287"/>
<ellipse cx="142.5" cy="49" rx="3" ry="8" fill="#b98a72" opacity=".6"/>
<path d="M144 39 Q146 24 154 12 Q162 2 174 -1 L196 -3 V4 Q182 6 170 14 Q158 24 152 38Z" fill="#2a221f"/>
<path d="M147 38.5 L171 27.5" stroke="#1e1a20" stroke-width="2.2"/>
<path d="M171.5 27 H196 V51 L177 50 Q172 49 171.5 43Z" fill="#7d7aa6" fill-opacity=".55" stroke="#1e1a20" stroke-width="2.4"/>
<ellipse cx="186" cy="39" rx="4" ry="2.3" fill="#4a4fb8" opacity=".6"/>
<path d="M182 55 Q179 62 184 65 Q189 66 193 62" fill="#c9a08a"/>
<path d="M176 76 Q186 73 196 75 V82 Q186 84 178 80Z" fill="#b8857a"/>
<path d="M141 80 Q150 104 176 106 Q190 106 196 100 V115 Q180 122 160 116 Q140 104 133 88Z" fill="#b8967e" opacity=".45"/>
<path d="M-3 147 L14 147 Q22 118 46 106 Q68 99 88 99 L126 90 Q140 112 158 129 Q176 130 196 108 V147Z" fill="url(#shirt)"/>
</g>
</svg></body></html>
